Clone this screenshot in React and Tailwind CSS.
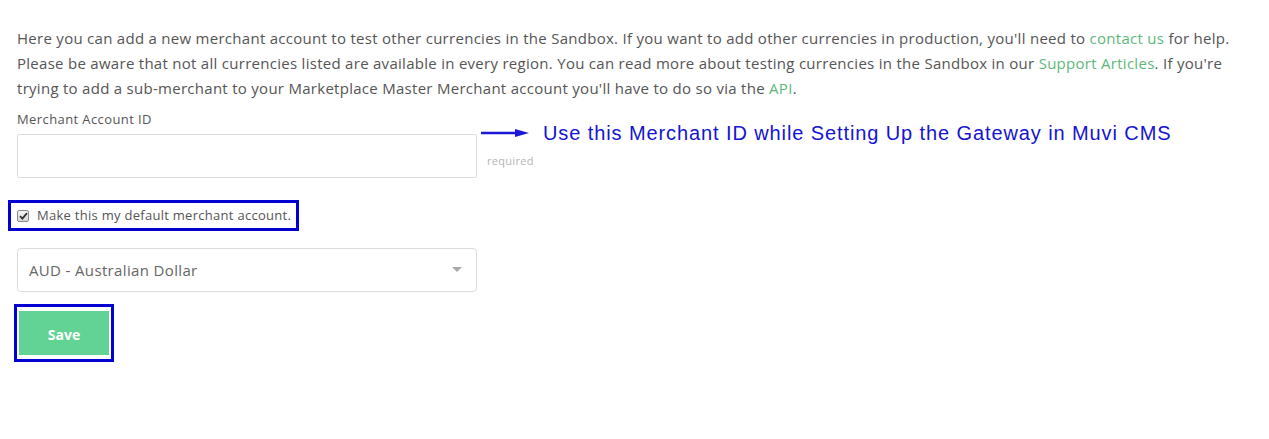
export default function App() {
  const green = "text-[#5cb87a]";
  return (
    <div className="w-[1269px] h-[439px] bg-white font-['Open_Sans',sans-serif] text-[#555]">
      <div className="pl-[17px] pt-[26px]">
        <p className="text-[15px] leading-[25px] tracking-[0.28px] whitespace-nowrap">
          Here you can add a new merchant account to test other currencies in the Sandbox. If you want to add other currencies in production, you'll need to{" "}
          <span className={green}>contact us</span> for help.
          <br />
          Please be aware that not all currencies listed are available in every region. You can read more about testing currencies in the Sandbox in our{" "}
          <span className={green}>Support Articles</span>. If you're
          <br />
          trying to add a sub-merchant to your Marketplace Master Merchant account you'll have to do so via the{" "}
          <span className={green}>API</span>.
        </p>
        <div className="mt-[9px] text-[13px] leading-[18px] tracking-[0.4px]">Merchant Account ID</div>
        <div className="mt-[6px] flex items-start">
          <div className="w-[460px] h-[44px] border border-[#dcdcdc] rounded-[2px]" />
          <div className="flex flex-col">
            <div className="flex items-center h-[20px] mt-[-11px]">
              <svg width="50" height="10" viewBox="0 0 50 10" className="ml-[4px]">
                <line x1="0" y1="5" x2="36" y2="5" stroke="#1a1ad6" strokeWidth="2.5" />
                <polygon points="34,1 48,5 34,9" fill="#1a1ad6" />
              </svg>
              <span className="ml-[12px] text-[20px] leading-[24px] text-[#1414d2] font-['Liberation_Sans',sans-serif] whitespace-nowrap tracking-[0.9px]">
                Use this Merchant ID while Setting Up the Gateway in Muvi CMS
              </span>
            </div>
            <span className="ml-[10px] mt-[10px] text-[11px] text-[#b5b5b5] tracking-[0.3px]">required</span>
          </div>
        </div>
      </div>
      <div className="ml-[8px] mt-[22px] w-[291px] h-[31px] border-[3px] border-[#0000d0] flex items-center pl-[6px]">
        <span className="w-[12px] h-[12px] border border-[#8a8a8a] rounded-[2px] bg-gradient-to-b from-[#f4f4f4] to-[#d8d8d8] flex items-center justify-center">
          <svg width="9" height="8" viewBox="0 0 9 8">
            <path d="M1 4.2 L3.4 6.6 L8 1.2" fill="none" stroke="#333" strokeWidth="1.8" />
          </svg>
        </span>
        <span className="ml-[8px] text-[13px] text-[#555] tracking-[0.28px]">Make this my default merchant account.</span>
      </div>
      <div className="ml-[17px] mt-[17px] w-[460px] h-[44px] border border-[#dcdcdc] rounded-[4px] flex items-center justify-between pl-[11px] pr-[14px]">
        <span className="text-[15px] text-[#666] tracking-[0.35px]">AUD - Australian Dollar</span>
        <svg width="10" height="6" viewBox="0 0 10 6">
          <polygon points="0,0 10,0 5,5" fill="#aaa" />
        </svg>
      </div>
      <div className="ml-[14px] mt-[12px] w-[100px] h-[58px] border-[3px] border-[#0000d0] px-[2px] pt-[4px] pb-[4px] bg-white">
        <div className="w-full h-full bg-[#62d394] flex items-center justify-center text-white text-[14px] font-bold pt-[3px]">
          Save
        </div>
      </div>
    </div>
  );
}
